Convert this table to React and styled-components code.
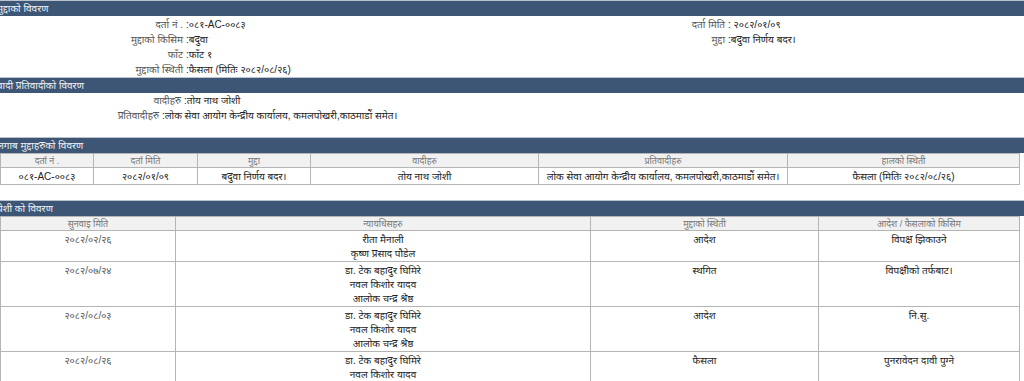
import React from "react";
import styled, { createGlobalStyle } from "styled-components";

const GlobalStyle = createGlobalStyle`
  html, body {
    margin: 0;
    padding: 0;
    background: #ffffff;
  }
  body {
    font-family: "Liberation Sans", "Noto Sans", sans-serif;
    font-size: 10px;
    color: #222;
    overflow: hidden;
  }
`;

const Page = styled.div`
  width: 1024px;
`;

const SectionHeader = styled.div`
  height: 15px;
  line-height: 15px;
  background: #3d5675;
  border-top: 1px solid #b9c2cd;
  color: #eef1f5;
  font-size: 10px;
  text-indent: -3px;
  white-space: nowrap;
  overflow: hidden;
`;

const InfoBlock = styled.div`
  display: grid;
  grid-template-columns: 186px 342px 200px 1fr;
  padding-top: 1px;
  padding-bottom: 0;
  height: 60px;
`;

const PartyBlock = styled.div`
  padding: 0 0 14px;
`;

const PartyRow = styled.div`
  display: flex;
`;

const Label = styled.div`
  text-align: right;
  line-height: 15px;
  padding-right: 3px;
  color: #555;
  white-space: nowrap;
  width: ${(p) => (p.$w ? `${p.$w}px` : "auto")};
  box-sizing: border-box;
`;

const Value = styled.div`
  line-height: 15px;
  color: #222;
  white-space: nowrap;
`;

const Table = styled.table`
  width: 1020px;
  border-collapse: collapse;
  table-layout: fixed;
  margin-bottom: ${(p) => p.$bottom || 0}px;
`;

const Th = styled.th`
  background: #f1f1f1;
  border: 1px solid #b5b5b5;
  font-weight: normal;
  color: #777;
  font-size: 9px;
  height: 13px;
  line-height: 12px;
  padding: 0;
  text-align: center;
  white-space: nowrap;
`;

const Td = styled.td`
  border: 1px solid #b5b5b5;
  text-align: center;
  vertical-align: top;
  line-height: 14px;
  padding: ${(p) => (p.$tall ? "2px 0 0" : "0")};
  color: ${(p) => (p.$muted ? "#555" : "#222")};
  white-space: nowrap;
`;

const JudgeLine = styled.div`
  line-height: 14px;
`;

const caseInfo = [
  ["दर्ता नं .", "०८१-AC-००८३", "दर्ता मिति", " २०८२/०१/०९"],
  ["मुद्दाको किसिम", "बदुवा", "मुद्दा", "बदुवा निर्णय बदर।"],
  ["फाँट", "फाँट १", "", ""],
  ["मुद्दाको स्थिती", "फैसला (मितिः २०८२/०८/२६)", "", ""],
];

const parties = [
  { label: "वादीहरु", value: "तोय नाथ जोशी", w: 184 },
  { label: "प्रतिवादीहरु", value: "लोक सेवा आयोग केन्द्रीय कार्यालय, कमलपोखरी,काठमाडौं समेत।", w: 162 },
];

const threeJudges = ["डा. टेक बहादुर घिमिरे", "नवल किशोर यादव", "आलोक चन्द्र श्रेष्ठ"];

const hearings = [
  { date: "२०८२/०२/२६", judges: ["रीता मैनाली", "कृष्ण प्रसाद पौडेल"], status: "आदेश", order: "विपक्ष झिकाउने" },
  { date: "२०८२/०७/२४", judges: threeJudges, status: "स्थगित", order: "विपक्षीको तर्फबाट।" },
  { date: "२०८२/०८/०३", judges: threeJudges, status: "आदेश", order: "नि.सु." },
  { date: "२०८२/०८/२६", judges: threeJudges, status: "फैसला", order: "पुनरावेदन दावी पुग्ने" },
];

const App = () => {
  return (
    <Page>
      <GlobalStyle />
      <SectionHeader>मुद्दाको विवरण</SectionHeader>
      <InfoBlock>
        {caseInfo.map(([l1, v1, l2, v2]) => (
          <React.Fragment key={l1}>
            <Label>{l1}</Label>
            <Value>:{v1}</Value>
            <Label>{l2}</Label>
            <Value>{l2 ? `:${v2}` : ""}</Value>
          </React.Fragment>
        ))}
      </InfoBlock>

      <SectionHeader>वादी प्रतिवादीको विवरण</SectionHeader>
      <PartyBlock>
        {parties.map((p) => (
          <PartyRow key={p.label}>
            <Label $w={p.w}>{p.label}</Label>
            <Value>:{p.value}</Value>
          </PartyRow>
        ))}
      </PartyBlock>

      <SectionHeader>लगाब मुद्दाहरुको विवरण</SectionHeader>
      <Table $bottom={15}>
        <colgroup>
          <col style={{ width: 93 }} />
          <col style={{ width: 104 }} />
          <col style={{ width: 113 }} />
          <col style={{ width: 228 }} />
          <col style={{ width: 249 }} />
          <col />
        </colgroup>
        <thead>
          <tr>
            <Th>दर्ता नं .</Th>
            <Th>दर्ता मिति</Th>
            <Th>मुद्दा</Th>
            <Th>वादीहरु</Th>
            <Th>प्रतिवादीहरु</Th>
            <Th>हालको स्थिती</Th>
          </tr>
        </thead>
        <tbody>
          <tr>
            <Td $tall>०८१-AC-००८३</Td>
            <Td $tall>२०८२/०१/०९</Td>
            <Td $tall>बदुवा निर्णय बदर।</Td>
            <Td $tall>तोय नाथ जोशी</Td>
            <Td $tall>लोक सेवा आयोग केन्द्रीय कार्यालय, कमलपोखरी,काठमाडौं समेत।</Td>
            <Td $tall>फैसला (मितिः २०८२/०८/२६)</Td>
          </tr>
        </tbody>
      </Table>

      <SectionHeader>पेशी को विवरण</SectionHeader>
      <Table>
        <colgroup>
          <col style={{ width: 175 }} />
          <col style={{ width: 415 }} />
          <col style={{ width: 228 }} />
          <col />
        </colgroup>
        <thead>
          <tr>
            <Th>सुनवाइ मिति</Th>
            <Th>न्यायधिसहरु</Th>
            <Th>मुद्दाको स्थिती</Th>
            <Th>आदेश / फैसलाको किसिम</Th>
          </tr>
        </thead>
        <tbody>
          {hearings.map((h) => (
            <tr key={h.date}>
              <Td $tall $muted>{h.date}</Td>
              <Td $tall>
                {h.judges.map((j) => (
                  <JudgeLine key={j}>{j}</JudgeLine>
                ))}
              </Td>
              <Td $tall>{h.status}</Td>
              <Td $tall>{h.order}</Td>
            </tr>
          ))}
        </tbody>
      </Table>
    </Page>
  );
};

export default App;
